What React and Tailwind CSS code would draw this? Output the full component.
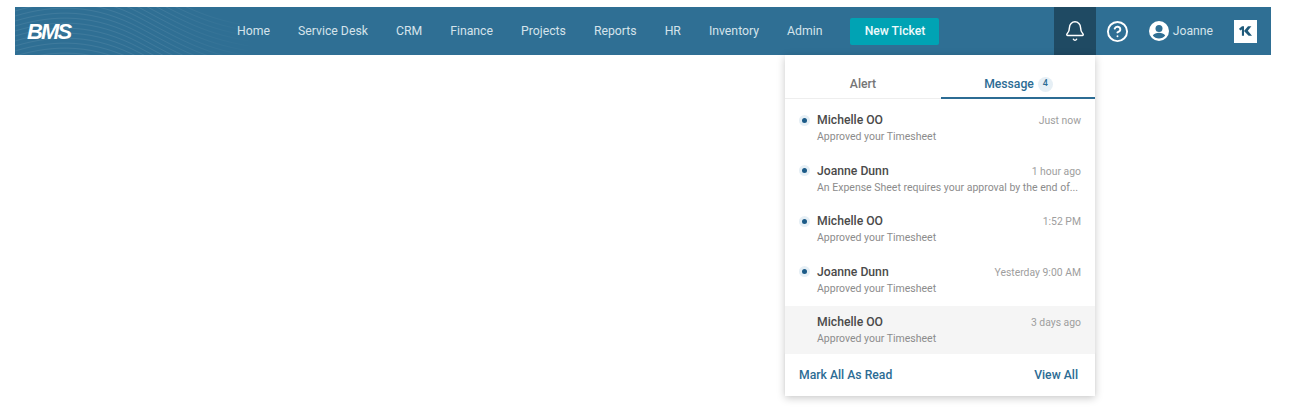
import { Bell, CircleHelp } from "lucide-react";

const navItems = ["Home", "Service Desk", "CRM", "Finance", "Projects", "Reports", "HR", "Inventory", "Admin"];

const messages = [
  { name: "Michelle OO", text: "Approved your Timesheet", time: "Just now", unread: true },
  { name: "Joanne Dunn", text: "An Expense Sheet requires your approval by the end of...", time: "1 hour ago", unread: true },
  { name: "Michelle OO", text: "Approved your Timesheet", time: "1:52 PM", unread: true },
  { name: "Joanne Dunn", text: "Approved your Timesheet", time: "Yesterday 9:00 AM", unread: true },
  { name: "Michelle OO", text: "Approved your Timesheet", time: "3 days ago", unread: false },
];

function Waves() {
  const lines = [];
  for (let i = 0; i < 20; i++) {
    const y = i * 5 - 50;
    lines.push(
      <path
        key={i}
        d={`M0 ${y + 14} C 40 ${y + 2}, 80 ${y + 2}, 125 ${y + 26} S 190 ${y + 62}, 240 ${y + 70}`}
        fill="none"
        stroke="url(#wave-fade)"
        strokeWidth="1"
      />
    );
  }
  return (
    <svg className="absolute inset-0 h-full w-[240px]" viewBox="0 0 240 48" preserveAspectRatio="none">
      <defs>
        <linearGradient id="wave-fade" gradientUnits="userSpaceOnUse" x1="0" y1="0" x2="240" y2="0">
          <stop offset="0" stopColor="#ffffff" stopOpacity="0.08" />
          <stop offset="0.6" stopColor="#ffffff" stopOpacity="0.08" />
          <stop offset="1" stopColor="#ffffff" stopOpacity="0" />
        </linearGradient>
      </defs>
      {lines}
    </svg>
  );
}

function UserIcon() {
  return (
    <svg width="20" height="20" viewBox="0 0 20 20">
      <circle cx="10" cy="10" r="10" fill="#ffffff" />
      <circle cx="10" cy="7.6" r="3.5" fill="#2f6f94" />
      <path d="M3.8 14.6c1.2-2 3.6-2.9 6.2-2.9s5 .9 6.2 2.9c-1.4 1.8-3.6 2.9-6.2 2.9s-4.8-1.1-6.2-2.9z" fill="#2f6f94" />
    </svg>
  );
}

function KLogo() {
  return (
    <div className="flex h-[23px] w-[23px] items-center justify-center bg-white">
      <svg width="13" height="10" viewBox="0 0 13 10">
        <path d="M0 2.8 3 0.2h2v9.6H2.9V3.4L1.2 4.6z" fill="#1f5a7a" />
        <path d="M5 5 9 0.2h3.4L8.8 4.8l4.2 5H9.6z" fill="#1f5a7a" />
      </svg>
    </div>
  );
}

function MessageRow({ name, text, time, unread }) {
  return (
    <div className={`relative flex h-[47.5px] flex-col justify-center pt-[2px] pl-[32px] pr-[14px] ${unread ? "" : "bg-[#f5f5f5]"}`}>
      {unread && (
        <span className="absolute left-[14px] top-[10.5px] flex h-[11px] w-[11px] items-center justify-center rounded-full bg-[#e6eff5]">
          <span className="h-[5px] w-[5px] rounded-full bg-[#1b5a87]" />
        </span>
      )}
      <div className="flex items-center justify-between">
        <span className="text-[12.2px] leading-[17px] font-medium text-[#4a4a4a]">{name}</span>
        <span className="text-[10.4px] leading-[17px] text-[#9e9e9e]">{time}</span>
      </div>
      <div className="mb-[1px] whitespace-nowrap text-[10.5px] leading-[15px] text-[#8c8c8c]">{text}</div>
    </div>
  );
}

export default function App() {
  return (
    <div className="min-h-[412px] bg-white pt-[7px] pl-[15px] font-['Roboto',sans-serif]">
      <header className="relative flex h-[48px] w-[1256px] items-center bg-[#2f6f94] text-white">
        <Waves />
        <span className="relative ml-[12px] w-[210px] font-['Liberation_Sans',sans-serif] text-[22px] font-bold tracking-[-1.9px] italic">BMS</span>
        <nav className="relative flex items-center gap-[28px] pt-[1px] text-[12.25px] text-[#d5e3eb]">
          {navItems.map((item) => (
            <span key={item}>{item}</span>
          ))}
          <button className="-mt-[1px] h-[27px] w-[89px] rounded-[2px] bg-[#00a3b4] text-[12.2px] font-medium text-[#eefafb]">New Ticket</button>
        </nav>
        <div className="relative ml-auto flex h-full items-center pr-[14px]">
          <div className="flex h-full w-[42px] items-center justify-center bg-[#1f4a63]">
            <Bell size={22} strokeWidth={1.6} />
          </div>
          <CircleHelp size={23} strokeWidth={2} className="ml-[10px]" />
          <div className="ml-[20px] flex items-center gap-[4px]">
            <UserIcon />
            <span className="pt-[1px] text-[12.2px] text-[#d5e3eb]">Joanne</span>
          </div>
          <div className="ml-[21px]">
            <KLogo />
          </div>
        </div>
        <div className="absolute left-[770px] top-[48px] z-10 h-[341px] w-[310px] bg-white shadow-[0_2px_8px_rgba(0,0,0,0.22)]">
          <div className="flex h-[44px] border-b border-[#eeeeee] text-[12.2px] font-medium">
            <div className="flex w-[156px] items-center justify-center pt-[16px] text-[#757575]">Alert</div>
            <div className="-mb-px flex w-[154px] items-center justify-center gap-[4px] border-b-2 border-[#2c6c94] pt-[16px] pl-[1px] text-[#2c6c94]">
              Message
              <span className="flex h-[15px] w-[15px] items-center justify-center rounded-full bg-[#e6eff5] text-[9px]">4</span>
            </div>
          </div>
          <div className="flex flex-col gap-[3px] pt-[5px]">
            {messages.map((m, i) => (
              <MessageRow key={i} {...m} />
            ))}
          </div>
          <div className="flex h-[42px] items-center justify-between pt-[1px] pl-[14px] pr-[17px] text-[12.2px] font-medium text-[#2c6c94] shadow-[0_-1px_2px_rgba(0,0,0,0.06)]">
            <span>Mark All As Read</span>
            <span>View All</span>
          </div>
        </div>
      </header>
    </div>
  );
}
